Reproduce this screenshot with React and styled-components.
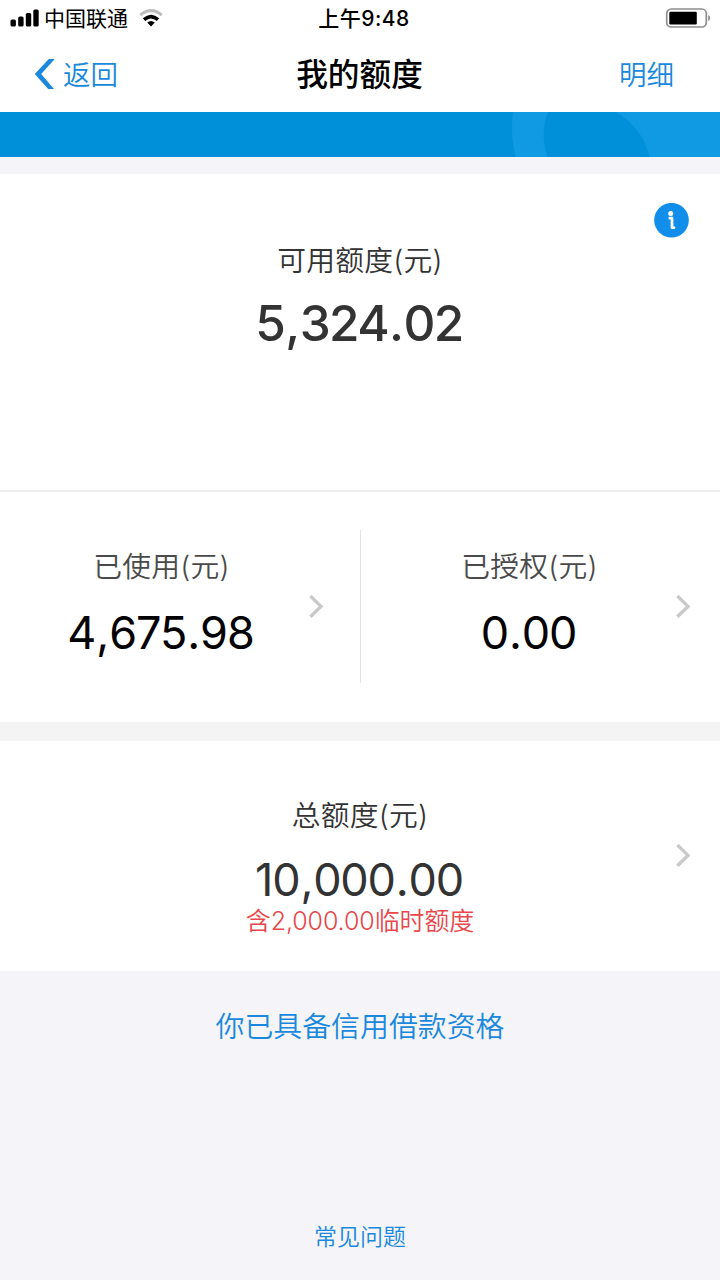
import React from "react";
import styled, { createGlobalStyle } from "styled-components";

const GlobalStyle = createGlobalStyle`
  * {
    box-sizing: border-box;
  }
  body {
    margin: 0;
    background: #f4f4f9;
    font-family: Inter, "Noto Sans CJK SC", sans-serif;
  }
`;

const Page = styled.div`
  width: 720px;
  height: 1280px;
  display: flex;
  flex-direction: column;
  background: #f4f4f9;
  overflow: hidden;
`;

const StatusBar = styled.div`
  display: grid;
  grid-template-columns: 1fr auto 1fr;
  align-items: center;
  height: 36px;
  padding: 0 9px 0 10px;
  background: #fff;
  color: #000;
  font-size: 21px;
  line-height: 36px;
`;

const Carrier = styled.div`
  display: flex;
  align-items: center;
  gap: 5px;
`;

const CarrierName = styled.span`
  padding: 2px 6px 0 0;
  line-height: 34px;
`;

const Time = styled.div`
  font-weight: 500;
  padding: 2px 0 0 7px;
  line-height: 34px;
  letter-spacing: 0.5px;
`;

const Battery = styled.svg`
  justify-self: end;
`;

const NavBar = styled.div`
  display: grid;
  grid-template-columns: 1fr auto 1fr;
  align-items: center;
  height: 76px;
  padding: 0 46px 0 34px;
  background: #fff;
`;

const NavButton = styled.div`
  display: flex;
  align-items: center;
  justify-content: ${(props) => (props.$end ? "flex-end" : "flex-start")};
  gap: 8px;
  color: #1a89dd;
  font-size: 27.5px;
  font-weight: 350;
`;

const NavText = styled.span`
  padding-top: 2px;
  line-height: 74px;
`;

const Title = styled.div`
  font-size: 31.7px;
  font-weight: 500;
  line-height: 74px;
  color: #000;
  padding: 2px 0 0 11px;
`;

const Banner = styled.svg`
  display: block;
  flex: none;
  width: 720px;
  height: 45px;
`;

const Gap = styled.div`
  height: ${(props) => props.$height}px;
  background: ${(props) => props.$color};
`;

const Available = styled.section`
  height: 318px;
  padding-top: 29px;
  background: #fff;
  border-bottom: 2px solid #eeeeee;
  text-align: center;
`;

const InfoRow = styled.div`
  display: flex;
  justify-content: flex-end;
  height: 37px;
  padding-right: 31px;
`;

const Label = styled.div`
  font-size: 28.8px;
  font-weight: 350;
  line-height: 42px;
  letter-spacing: 0.2px;
  color: ${(props) => props.$color || "#333"};
`;

const AmountText = styled.div`
  margin-top: ${(props) => props.$top}px;
  padding-right: 2px;
  font-size: ${(props) => props.$size || 45}px;
  font-weight: ${(props) => props.$weight || 400};
  line-height: 60px;
  letter-spacing: ${(props) => props.$spacing}px;
  color: ${(props) => props.$color || "#333"};
`;

const Mark = styled.span`
  margin: 0 1px;
`;

const Split = styled.section`
  display: flex;
  height: 230px;
  padding: 38px 0 39px;
  background: #fff;
`;

const Cell = styled.div`
  display: flex;
  align-items: center;
  width: ${(props) => props.$width}px;
  padding-right: ${(props) => props.$right}px;
  border-right: ${(props) => (props.$divided ? "1px solid #e2e2e2" : "none")};
`;

const CellText = styled.div`
  flex: 1;
  padding: 0 0 5px ${(props) => props.$indent}px;
  text-align: center;
`;

const Total = styled.section`
  display: grid;
  grid-template-columns: 45px 1fr 16px;
  align-items: center;
  height: 230px;
  padding-right: 29px;
  background: #fff;
`;

const TotalText = styled.div`
  text-align: center;
  padding-top: 22px;
`;

const Temporary = styled.div`
  margin-top: -7px;
  font-size: 25px;
  font-weight: 350;
  line-height: 36px;
  letter-spacing: -0.1px;
  color: #e8474b;
`;

const Footer = styled.footer`
  flex: 1;
  display: flex;
  flex-direction: column;
  align-items: center;
  justify-content: space-between;
  padding: 35px 0 25px;
  color: #1a89dd;
  font-weight: 350;
`;

const Qualification = styled.div`
  font-size: 28.9px;
  line-height: 42px;
`;

const Faq = styled.div`
  font-size: 23px;
  line-height: 36px;
`;

function Amount({ value, ...rest }) {
  return (
    <AmountText {...rest}>
      {value.split(/([.,])/).map((part, i) =>
        part === "." || part === "," ? <Mark key={i}>{part}</Mark> : part
      )}
    </AmountText>
  );
}

function Signal() {
  return (
    <svg width="29" height="18" viewBox="0 0 29 18">
      <rect x="0.5" y="10.5" width="5.4" height="7" rx="1.6" />
      <rect x="8.2" y="7.5" width="5.4" height="10" rx="1.6" />
      <rect x="15.8" y="4" width="5.4" height="13.5" rx="1.6" />
      <rect x="23.3" y="0.5" width="5.4" height="17" rx="1.6" />
    </svg>
  );
}

function Wifi() {
  return (
    <svg width="24" height="18" viewBox="0 0 24 18" fill="none">
      <path d="M1.2 6.2 Q12 -3 22.8 6.2" stroke="#bdbdbd" strokeWidth="3" />
      <path d="M5 10.6 Q12 4.6 19 10.6" stroke="#000" strokeWidth="3.6" />
      <path d="M8.2 13.6 Q12 10.4 15.8 13.6 L12 17.4 Z" fill="#000" />
    </svg>
  );
}

function Chevron() {
  return (
    <svg width="16" height="26" viewBox="0 0 16 26" fill="none">
      <path d="M2.4 2 L13 12.4 L2.4 22.8" stroke="#cacaca" strokeWidth="3.4" />
    </svg>
  );
}

function BackArrow() {
  return (
    <svg width="21" height="30" viewBox="0 0 21 30" fill="#1a89dd">
      <path d="M14.8 0 H20.8 L7.2 15 L20 30 H14.2 L0.8 15 Z" />
    </svg>
  );
}

function Info() {
  return (
    <svg width="35" height="35" viewBox="0 0 35 35">
      <circle cx="17.5" cy="17.2" r="17.3" fill="#108ee9" />
      <circle cx="16.7" cy="10.4" r="2.5" fill="#fff" />
      <path
        d="M15.8 15.2 H18 V24.7 H20"
        fill="none"
        stroke="#fff"
        strokeWidth="2.8"
        strokeLinecap="round"
        strokeLinejoin="round"
      />
    </svg>
  );
}

export default function App() {
  return (
    <Page>
      <GlobalStyle />
      <StatusBar>
        <Carrier>
          <Signal />
          <CarrierName>中国联通</CarrierName>
          <Wifi />
        </Carrier>
        <Time>上午9:48</Time>
        <Battery width="46" height="20" viewBox="0 0 46 20">
          <rect x="1.7" y="1" width="39.6" height="18" rx="4.5" fill="#fff" stroke="#8e8e8e" strokeWidth="1.7" />
          <rect x="4.3" y="3.7" width="27.5" height="12.8" rx="1.2" fill="#000" />
          <path d="M43.2 7 Q45.2 7.5 45.2 10 Q45.2 12.5 43.2 13 Z" fill="#8e8e8e" />
        </Battery>
      </StatusBar>
      <NavBar>
        <NavButton>
          <BackArrow />
          <NavText>返回</NavText>
        </NavButton>
        <Title>我的额度</Title>
        <NavButton $end>
          <NavText>明细</NavText>
        </NavButton>
      </NavBar>
      <Banner viewBox="0 0 720 45">
        <rect width="720" height="45" fill="#0090d9" />
        <path d="M513 0 Q510 22 515.5 45 H720 V0 Z" fill="#109ae3" />
        <path d="M548 0 Q539.5 22 547.5 45 H649.5 Q643 16 616 0 Z" fill="#0090d9" />
      </Banner>
      <Gap $height={17} $color="#f4f4f9" />
      <Available>
        <InfoRow>
          <Info />
        </InfoRow>
        <Label>可用额度(元)</Label>
        <Amount value="5,324.02" $top={11} $size={49.5} $weight={500} $spacing={-1.6} />
      </Available>
      <Split>
        <Cell $width={361} $right={36} $divided>
          <CellText $indent={15}>
            <Label $color="#4a4a4a">已使用(元)</Label>
            <Amount value="4,675.98" $top={15} $spacing={-1.1} $color="#000" />
          </CellText>
          <Chevron />
        </Cell>
        <Cell $width={359} $right={29}>
          <CellText $indent={23}>
            <Label $color="#4a4a4a">已授权(元)</Label>
            <Amount value="0.00" $top={15} $spacing={-1.2} $color="#000" />
          </CellText>
          <Chevron />
        </Cell>
      </Split>
      <Gap $height={19} $color="#f4f4f4" />
      <Total>
        <span />
        <TotalText>
          <Label>总额度(元)</Label>
          <Amount value="10,000.00" $top={13} $spacing={-1.2} />
          <Temporary>含2,000.00临时额度</Temporary>
        </TotalText>
        <Chevron />
      </Total>
      <Footer>
        <Qualification>你已具备信用借款资格</Qualification>
        <Faq>常见问题</Faq>
      </Footer>
    </Page>
  );
}
